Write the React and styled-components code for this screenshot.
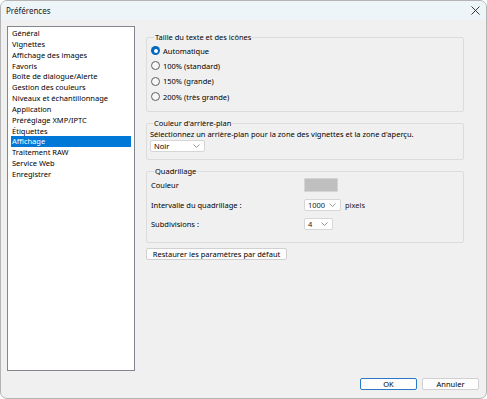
import React from "react";
import styled, { createGlobalStyle } from "styled-components";

const GlobalStyle = createGlobalStyle`
  html, body { margin: 0; padding: 0; background: #ffffff; }
  body {
    font-family: "Noto Sans", "Open Sans", sans-serif;
    font-size: 7.5px;
    color: #000;
  }
  * { box-sizing: border-box; }
`;

const Window = styled.div`
  width: 487px;
  height: 399px;
  border: 1px solid #b4b4b4;
  border-radius: 7px;
  overflow: hidden;
  background: #f0f0f0;
  display: flex;
  flex-direction: column;
`;

const TitleBar = styled.div`
  height: 19px;
  flex-shrink: 0;
  background: #eef5f9;
  display: flex;
  align-items: center;
  justify-content: space-between;
  padding: 0 4px 0 5px;
`;

const Title = styled.span`
  font-size: 8px;
  color: #1a1a1a;
`;

const CloseButton = styled.button`
  width: 14px;
  height: 14px;
  border: none;
  background: none;
  padding: 0;
  display: flex;
  align-items: center;
  justify-content: center;
`;

const Body = styled.div`
  flex: 1;
  display: flex;
  flex-direction: column;
  padding: 6px 6px 0 6px;
`;

const Main = styled.div`
  display: flex;
  height: 345px;
`;

const List = styled.ul`
  list-style: none;
  margin: 0;
  width: 128px;
  height: 100%;
  background: #fff;
  border: 1px solid #82878f;
  padding: 1px 3px;
`;

const Item = styled.li`
  height: 10.85px;
  line-height: 10.85px;
  padding-left: 1px;
  white-space: nowrap;
  background: ${(p) => (p.$selected ? "#0078d7" : "transparent")};
  color: ${(p) => (p.$selected ? "#fff" : "#000")};
`;

const Panel = styled.div`
  margin-left: 11px;
  width: 318px;
  display: flex;
  flex-direction: column;
  padding-top: 6px;
`;

const Group = styled.fieldset`
  margin: 0 0 ${(p) => p.$gap}px 0;
  padding: ${(p) => p.$pad};
  border: 1px solid #dcdcdc;
  border-radius: 2px;
  min-width: 0;
`;

const Legend = styled.legend`
  padding: 0 1px;
  margin-left: 3px;
  line-height: 10px;
  color: #000;
`;

const RadioRow = styled.label`
  display: flex;
  align-items: center;
  height: 15.3px;
  gap: 3px;
`;

const RadioDot = styled.span`
  width: 9px;
  height: 9px;
  border-radius: 50%;
  flex-shrink: 0;
  background: ${(p) => (p.$on ? "#0067c0" : "#f7f7f7")};
  border: ${(p) => (p.$on ? "none" : "1px solid #5f5f5f")};
  display: flex;
  align-items: center;
  justify-content: center;
  &::after {
    content: "";
    display: ${(p) => (p.$on ? "block" : "none")};
    width: 4px;
    height: 4px;
    border-radius: 50%;
    background: #fff;
  }
`;

const Hint = styled.div`
  line-height: 11px;
  white-space: nowrap;
`;

const Select = styled.div`
  width: ${(p) => p.$w}px;
  height: 12px;
  background: #fff;
  border: 1px solid #d6d6d6;
  border-radius: 2px;
  display: flex;
  align-items: center;
  justify-content: space-between;
  padding: 0 4px 0 3px;
`;

const Grid = styled.div`
  display: grid;
  grid-template-columns: 153px auto;
  align-items: center;
  row-gap: 7px;
`;

const ControlCell = styled.div`
  display: flex;
  align-items: center;
  gap: 4px;
  color: #222;
`;

const Swatch = styled.div`
  width: 34px;
  height: 14px;
  background: #bfbfbf;
  border: 1px solid #d4d4d4;
  border-radius: 1px;
`;

const Button = styled.button`
  font-family: inherit;
  font-size: 7.5px;
  color: #000;
  height: 12px;
  width: ${(p) => p.$w}px;
  padding: 0;
  background: #fdfdfd;
  border: 1px solid ${(p) => (p.$primary ? "#2b78c7" : "#d0d0d0")};
  border-radius: 2px;
  line-height: 10px;
`;

const RestoreRow = styled.div`
  display: flex;
`;

const Footer = styled.div`
  display: flex;
  justify-content: flex-end;
  gap: 5px;
  padding: 7px 1px 0 0;
`;

const Chevron = () => (
  <svg width="7" height="4" viewBox="0 0 7 4">
    <polyline points="0.5,0.5 3.5,3.5 6.5,0.5" fill="none" stroke="#8a8a8a" strokeWidth="0.9" />
  </svg>
);

const categories = [
  "Général",
  "Vignettes",
  "Affichage des images",
  "Favoris",
  "Boîte de dialogue/Alerte",
  "Gestion des couleurs",
  "Niveaux et échantillonnage",
  "Application",
  "Préréglage XMP/IPTC",
  "Étiquettes",
  "Affichage",
  "Traitement RAW",
  "Service Web",
  "Enregistrer",
];

const sizes = ["Automatique", "100% (standard)", "150% (grande)", "200% (très grande)"];

export default function App() {
  return (
    <>
      <GlobalStyle />
      <Window>
        <TitleBar>
          <Title>Préférences</Title>
          <CloseButton>
            <svg width="9" height="9" viewBox="0 0 9 9">
              <path d="M0.5 0.5 L8.5 8.5 M8.5 0.5 L0.5 8.5" stroke="#222" strokeWidth="0.9" />
            </svg>
          </CloseButton>
        </TitleBar>
        <Body>
          <Main>
            <List>
              {categories.map((c) => (
                <Item key={c} $selected={c === "Affichage"}>
                  {c}
                </Item>
              ))}
            </List>
            <Panel>
              <Group $pad="1px 4px 7px 4px" $gap={6}>
                <Legend>Taille du texte et des icônes</Legend>
                {sizes.map((s, i) => (
                  <RadioRow key={s}>
                    <RadioDot $on={i === 0} />
                    {s}
                  </RadioRow>
                ))}
              </Group>
              <Group $pad="1px 4px 7px 3px" $gap={6}>
                <Legend>Couleur d'arrière-plan</Legend>
                <Hint>Sélectionnez un arrière-plan pour la zone des vignettes et la zone d'aperçu.</Hint>
                <Select $w={55}>
                  Noir <Chevron />
                </Select>
              </Group>
              <Group $pad="2px 4px 12px 4px" $gap={5}>
                <Legend>Quadrillage</Legend>
                <Grid>
                  <span>Couleur</span>
                  <ControlCell>
                    <Swatch />
                  </ControlCell>
                  <span>Intervalle du quadrillage :</span>
                  <ControlCell>
                    <Select $w={37}>
                      1000 <Chevron />
                    </Select>
                    pixels
                  </ControlCell>
                  <span>Subdivisions :</span>
                  <ControlCell>
                    <Select $w={29}>
                      4 <Chevron />
                    </Select>
                  </ControlCell>
                </Grid>
              </Group>
              <RestoreRow>
                <Button $w={141}>Restaurer les paramètres par défaut</Button>
              </RestoreRow>
            </Panel>
          </Main>
          <Footer>
            <Button $w={57} $primary>OK</Button>
            <Button $w={57}>Annuler</Button>
          </Footer>
        </Body>
      </Window>
    </>
  );
}
